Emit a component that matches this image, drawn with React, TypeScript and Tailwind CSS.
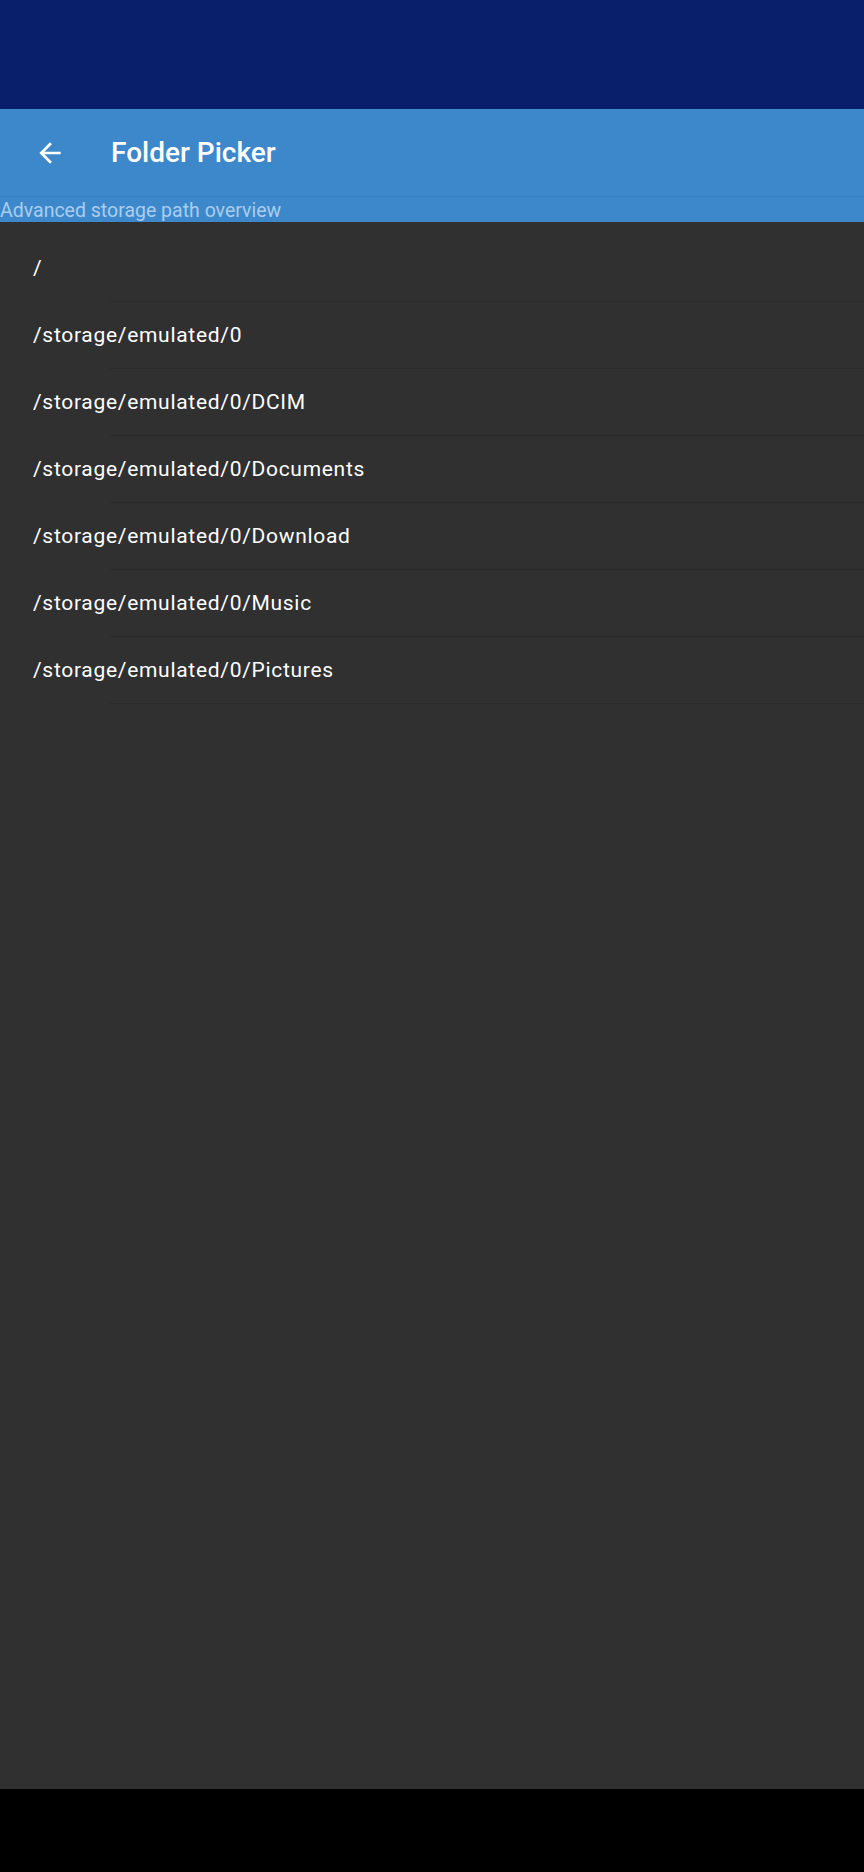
const folders = [
  '/',
  '/storage/emulated/0',
  '/storage/emulated/0/DCIM',
  '/storage/emulated/0/Documents',
  '/storage/emulated/0/Download',
  '/storage/emulated/0/Music',
  '/storage/emulated/0/Pictures',
];

export default function App() {
  return (
    <div className="flex h-[1872px] w-[864px] flex-col bg-black font-['Roboto',sans-serif]">
      {/* status bar */}
      <div className="h-[109px] shrink-0 bg-[#0a1f6b]" />

      {/* app bar */}
      <div className="flex h-[88px] shrink-0 items-center border-b border-[#3a80c2] bg-[#3d88cb]">
        <button className="ml-[34px] flex h-8 w-8 items-center justify-center text-white">
          <svg viewBox="0 0 24 24" className="h-8 w-8" fill="currentColor">
            <path d="M20 11H7.83l5.59-5.59L12 4l-8 8 8 8 1.41-1.41L7.83 13H20v-2z" />
          </svg>
        </button>
        <h1 className="ml-[45px] text-[28px] font-medium text-white">Folder Picker</h1>
      </div>
      <div className="h-[25px] shrink-0 bg-[#3d88cb] text-[19.5px] leading-[27px] text-[#a9cdee]">
        Advanced storage path overview
      </div>

      {/* folder list */}
      <div className="flex-1 bg-[#303030] pt-[13px]">
        {folders.map((path) => (
          <div
            key={path}
            className="relative flex h-[67px] items-center pl-[33px] text-[21px] tracking-[0.7px] text-white"
          >
            {path}
            <div className="absolute bottom-0 left-[110px] right-0 h-px bg-[#2a2a2a]" />
          </div>
        ))}
      </div>

      {/* nav bar */}
      <div className="h-[83px] shrink-0 bg-black" />
    </div>
  );
}
